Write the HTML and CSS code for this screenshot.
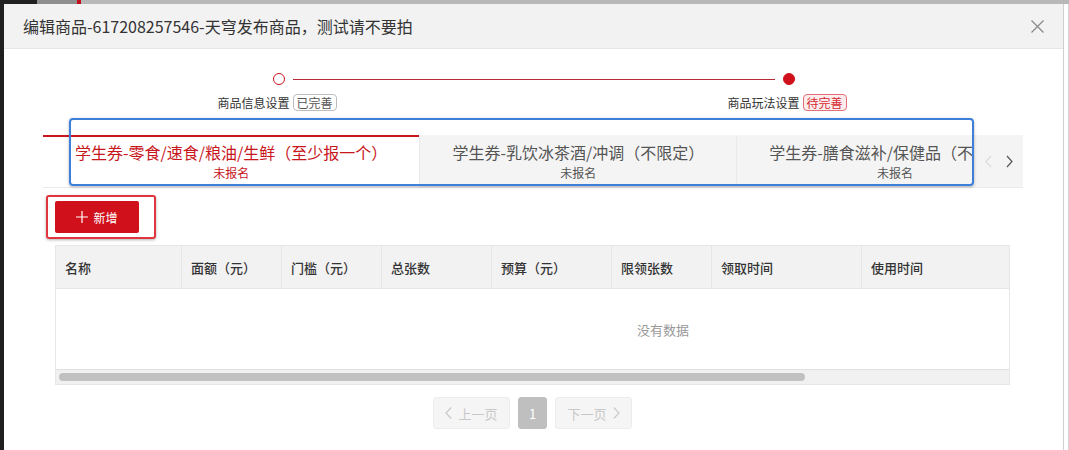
FILE: index.html
```html
<!DOCTYPE html>
<html lang="zh-CN">
<head>
  <meta charset="UTF-8">
  <title>编辑商品</title>
  <link rel="stylesheet" href="styles.css">
</head>
<body>
  <div class="topnav">
    <span class="nav-dark"></span>
    <span class="nav-mid"></span>
    <span class="nav-mark"></span>
    <span class="nav-rest"></span>
  </div>
  <div class="page-edge"></div>

  <div class="modal">
    <div class="modal-head">
      <span class="modal-title">编辑商品-617208257546-天穹发布商品，测试请不要拍</span>
      <svg class="close" width="13" height="13" viewBox="0 0 13 13">
        <path d="M0.5 0.5 L12.5 12.5 M12.5 0.5 L0.5 12.5" stroke="#8a8a8a" stroke-width="1.3" fill="none"/>
      </svg>
    </div>

    <div class="steps">
      <div class="step">
        <span class="step-dot"></span>
        <div class="step-label">商品信息设置<span class="tag">已完善</span></div>
      </div>
      <span class="step-line"></span>
      <div class="step">
        <span class="step-dot current"></span>
        <div class="step-label">商品玩法设置<span class="tag todo">待完善</span></div>
      </div>
    </div>

    <div class="content">
      <div class="tabs-wrap">
        <div class="tabs">
          <div class="tab-view">
            <div class="tab active">
              <div class="tab-name">学生券-零食/速食/粮油/生鲜（至少报一个）</div>
              <div class="tab-state">未报名</div>
            </div>
            <div class="tab">
              <div class="tab-name">学生券-乳饮冰茶酒/冲调（不限定）</div>
              <div class="tab-state">未报名</div>
            </div>
            <div class="tab">
              <div class="tab-name">学生券-膳食滋补/保健品（不限定）</div>
              <div class="tab-state">未报名</div>
            </div>
          </div>
          <div class="tab-arrows">
            <svg width="7" height="13" viewBox="0 0 7 13"><path d="M6 1 L1 6.5 L6 12" stroke="#dcdcdc" stroke-width="1.2" fill="none"/></svg>
            <svg width="7" height="13" viewBox="0 0 7 13"><path d="M1 1 L6 6.5 L1 12" stroke="#555" stroke-width="1.2" fill="none"/></svg>
          </div>
        </div>
        <div class="mark-blue"></div>
      </div>

      <div class="panel">
        <div class="toolbar">
          <button class="btn-add">
            <svg width="12" height="12" viewBox="0 0 12 12"><path d="M6 0 V12 M0 6 H12" stroke="#fff" stroke-width="1.2"/></svg>
            新增
          </button>
          <div class="mark-red"></div>
        </div>

        <div class="grid">
          <table>
            <colgroup>
              <col style="width:126px">
              <col style="width:100px">
              <col style="width:100px">
              <col style="width:110px">
              <col style="width:120px">
              <col style="width:100px">
              <col style="width:150px">
              <col style="width:150px">
              <col style="width:264px">
            </colgroup>
            <thead>
              <tr>
                <th>名称</th>
                <th>面额（元）</th>
                <th>门槛（元）</th>
                <th>总张数</th>
                <th>预算（元）</th>
                <th>限领张数</th>
                <th>领取时间</th>
                <th>使用时间</th>
                <th></th>
              </tr>
            </thead>
            <tbody>
              <tr><td class="empty" colspan="9">没有数据</td></tr>
            </tbody>
          </table>
          <div class="hscroll"><div class="hscroll-thumb"></div></div>
        </div>

        <div class="pager">
          <span class="pg-btn">
            <svg width="7" height="12" viewBox="0 0 7 12"><path d="M6.2 0.5 L1 6 L6.2 11.5" stroke="#c8c8c8" stroke-width="1.1" fill="none"/></svg>
            上一页
          </span>
          <span class="pg-btn pg-num">1</span>
          <span class="pg-btn">
            下一页
            <svg width="7" height="12" viewBox="0 0 7 12"><path d="M0.8 0.5 L6 6 L0.8 11.5" stroke="#c8c8c8" stroke-width="1.1" fill="none"/></svg>
          </span>
        </div>
      </div>
    </div>
  </div>
</body>
</html>
```

FILE: styles.css
```css
body {
  margin: 0;
  height: 450px;
  overflow: hidden;
  background: #1f1f1f;
  font-family: "Noto Sans CJK SC", "Noto Sans", sans-serif;
  color: #333;
}
.topnav {
  display: flex;
  height: 4px;
}
.nav-dark {
  width: 37px;
  background: #202020;
}
.nav-mid {
  width: 40px;
  background: #8f8f8f;
}
.nav-mark {
  width: 4px;
  background: #c40d1e;
}
.nav-rest {
  flex: 1;
  background: #b8b8b8;
}
.page-edge {
  position: fixed;
  top: 4px;
  left: 1064px;
  right: 0;
  bottom: 0;
  background: #fff;
  border-right: 1px solid #d4d4d4;
}
.modal {
  position: fixed;
  top: 4px;
  left: 4px;
  width: 1059px;
  bottom: 0;
  background: #fff;
  border-right: 1px solid #cfcfcf;
}
.modal-head {
  height: 45px;
  box-sizing: border-box;
  background: #f2f2f2;
  border-bottom: 1px solid #e6e6e6;
  display: flex;
  align-items: center;
  justify-content: space-between;
  padding: 0 19px;
}
.modal-title {
  font-size: 16px;
  color: #333;
}

/* steps */
.steps {
  display: flex;
  justify-content: center;
  padding-top: 24px;
}
.step {
  width: 120px;
  display: flex;
  flex-direction: column;
  align-items: center;
}
.step-dot {
  width: 12px;
  height: 12px;
  box-sizing: border-box;
  border: 1.5px solid #c8161d;
  border-radius: 50%;
}
.step-dot.current {
  background: #d0101b;
  border-color: #d0101b;
}
.step-line {
  width: 482px;
  height: 1px;
  margin: 6px -46px 0;
  background: #b92a33;
}
.step-label {
  margin-top: 9px;
  display: flex;
  align-items: center;
  gap: 3px;
  font-size: 12px;
  white-space: nowrap;
  margin-left: -3px;
}
.tag {
  height: 17px;
  line-height: 15px;
  box-sizing: border-box;
  padding: 0 3px;
  border: 1px solid #bdbdbd;
  border-radius: 4px;
  color: #555;
}
.tag.todo {
  border-color: #e27079;
  background: #fdeced;
  color: #d4282f;
}

/* tabs */
.content {
  margin: 0 40px 0 39px;
}
.tabs-wrap {
  position: relative;
  margin-top: 24px;
}
.tabs {
  display: flex;
  border-bottom: 1px solid #ebebeb;
}
.tab-view {
  flex: 1;
  display: flex;
  overflow: hidden;
}
.tab {
  flex: none;
  padding: 4px 32px 6px;
  text-align: center;
  background: #f4f4f4;
  border-top: 2px solid transparent;
  border-left: 1px solid #e9e9e9;
  color: #555;
}
.tab.active {
  background: #fff;
  border-left: none;
  border-top-color: #c8161d;
  color: #c8161d;
}
.tab-name {
  font-size: 16px;
  line-height: 23px;
  white-space: nowrap;
}
.tab-state {
  font-size: 12px;
  line-height: 17px;
}
.tab-arrows {
  width: 49px;
  background: #f4f4f4;
  display: flex;
  align-items: center;
  justify-content: center;
  gap: 14px;
}
.mark-blue {
  position: absolute;
  left: 26px;
  top: -17px;
  width: 905px;
  height: 68px;
  box-sizing: border-box;
  border: 2px solid #3d7fd9;
  border-radius: 4px;
  box-shadow: 0 1px 3px rgba(0, 0, 0, 0.3);
}

/* panel */
.panel {
  padding: 13px 13px 0 12px;
}
.toolbar {
  position: relative;
}
.btn-add {
  width: 84px;
  height: 32px;
  padding: 0;
  border: none;
  border-radius: 2px;
  background: #d0111b;
  color: #fff;
  font-family: inherit;
  font-size: 12px;
  display: flex;
  align-items: center;
  justify-content: center;
  gap: 5px;
}
.mark-red {
  position: absolute;
  left: -9px;
  top: -6px;
  width: 110px;
  height: 44px;
  box-sizing: border-box;
  border: 2px solid #e0353f;
  border-radius: 3px;
  box-shadow: 0 1px 3px rgba(0, 0, 0, 0.3);
}
.grid {
  margin-top: 12px;
  border: 1px solid #e6e6e6;
  overflow: hidden;
}
.grid table {
  width: 1220px;
  table-layout: fixed;
  border-collapse: separate;
  border-spacing: 0;
}
.grid th {
  height: 42px;
  padding: 0 9px;
  background: #f2f2f2;
  border-right: 1px solid #e6e6e6;
  border-bottom: 1px solid #e6e6e6;
  text-align: left;
  font-size: 13px;
  font-weight: 500;
  color: #333;
  white-space: nowrap;
}
.grid td.empty {
  height: 80px;
  padding: 0 6px 0 0;
  text-align: center;
  font-size: 13px;
  color: #999;
}
.hscroll {
  height: 15px;
  box-sizing: border-box;
  background: #f1f1f1;
  border-top: 1px solid #e0e0e0;
  padding: 3px 0 0 3px;
}
.hscroll-thumb {
  width: 746px;
  height: 8px;
  border-radius: 4px;
  background: #c1c1c1;
}
.pager {
  margin-top: 12px;
  display: flex;
  justify-content: center;
  gap: 8px;
}
.pg-btn {
  width: 77px;
  height: 32px;
  box-sizing: border-box;
  border: 1px solid #ececec;
  border-radius: 3px;
  background: #f5f5f5;
  color: #c8c8c8;
  font-size: 13px;
  display: flex;
  align-items: center;
  justify-content: center;
  gap: 6px;
}
.pg-btn.pg-num {
  width: 29px;
  background: #bfbfbf;
  border-color: #bfbfbf;
  color: #fff;
}
```
